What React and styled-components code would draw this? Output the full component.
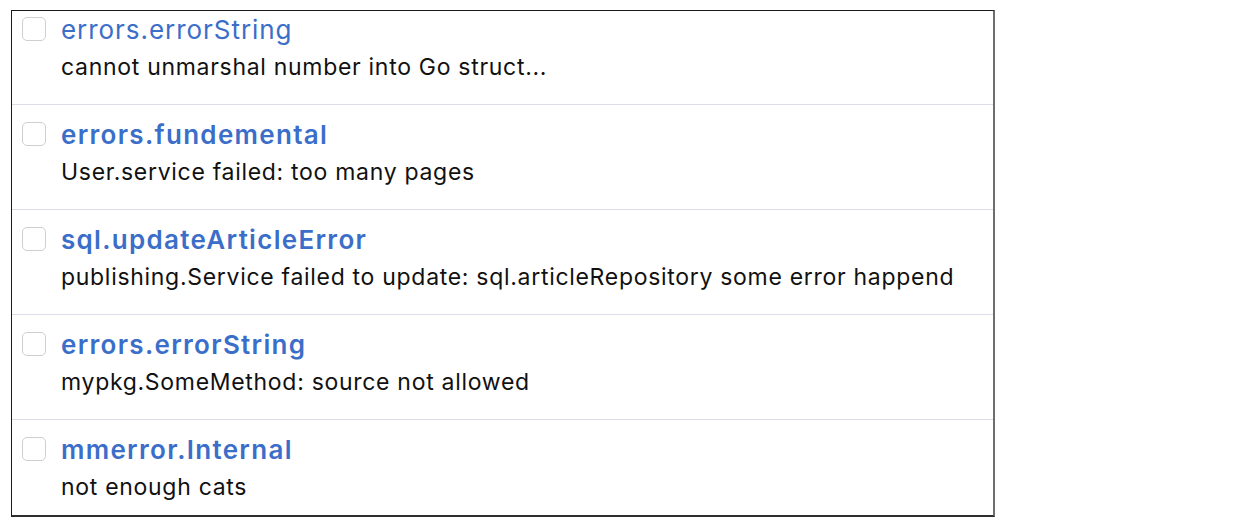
import React from "react"
import styled, { createGlobalStyle } from "styled-components"

const GlobalStyle = createGlobalStyle`
  body {
    margin: 0;
    background: #fff;
    font-family: Inter, "Noto Sans", sans-serif;
  }
`

const Frame = styled.div`
  margin: 10px 0 0 11px;
  width: 981px;
  height: 504px;
  border-top: 1px solid #1a1a1a;
  border-left: 1px solid #1a1a1a;
  border-right: 2px solid #6e6e6e;
  border-bottom: 2px solid #2e2e2e;
  overflow: hidden;
`

const List = styled.ul`
  list-style: none;
  margin: -11px 0 0;
  padding: 0;
`

const Row = styled.li`
  display: flex;
  align-items: flex-start;
  gap: 15px;
  height: 105px;
  box-sizing: border-box;
  padding: 17px 0 0 10px;
  border-bottom: 1px solid #dedbea;
`

const Check = styled.span`
  flex: none;
  width: 22px;
  height: 22px;
  border: 1px solid #cfcfcf;
  border-radius: 5px;
  background: #fff;
`

const Text = styled.div`
  display: flex;
  flex-direction: column;
  margin-top: -4px;
`

const Title = styled.a`
  color: #3b6ec9;
  font-size: 26px;
  line-height: 34px;
  letter-spacing: ${(p) => (p.$read ? "0.95px" : "1.3px")};
  font-weight: ${(p) => (p.$read ? 400 : 600)};
  text-decoration: none;
`

const Message = styled.span`
  color: #111;
  font-size: 23px;
  line-height: 40px;
  letter-spacing: 0.7px;
`

const errors = [
  { type: "errors.errorString", msg: "cannot unmarshal number into Go struct...", read: true },
  { type: "errors.fundemental", msg: "User.service failed: too many pages" },
  {
    type: "sql.updateArticleError",
    msg: "publishing.Service failed to update: sql.articleRepository some error happend",
  },
  { type: "errors.errorString", msg: "mypkg.SomeMethod: source not allowed" },
  { type: "mmerror.Internal", msg: "not enough cats" },
]

const App = () => (
  <>
    <GlobalStyle />
    <Frame>
      <List>
        {errors.map((e, i) => (
          <Row key={i}>
            <Check />
            <Text>
              <Title $read={e.read}>{e.type}</Title>
              <Message>{e.msg}</Message>
            </Text>
          </Row>
        ))}
      </List>
    </Frame>
  </>
)

export default App
